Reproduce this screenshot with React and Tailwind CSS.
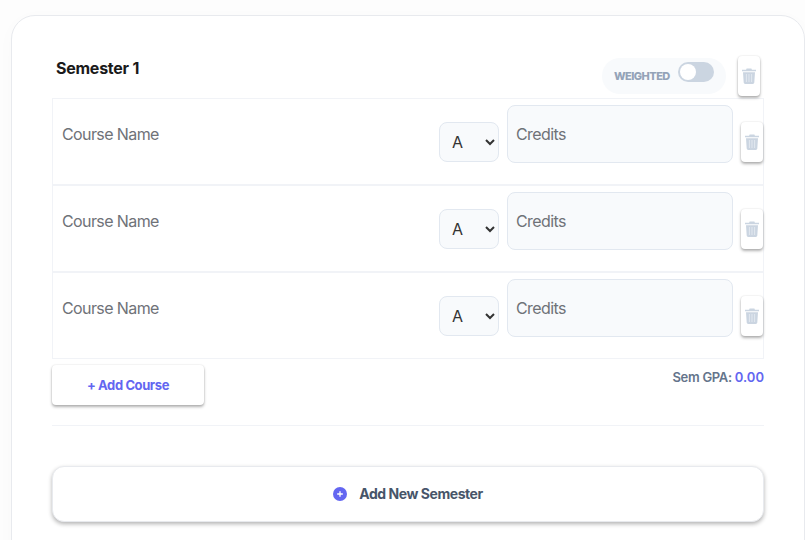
const COURSES = [1, 2, 3]

function TrashIcon() {
  return (
    <svg width="14" height="16" viewBox="0 0 14 16" className="block">
      <path d="M4.6 0.6h4.8l0.5 1.1H14v1.6H0V1.7h4.1zM1 4.3h12l-0.7 10.3c-0.05 0.8-0.7 1.4-1.5 1.4H3.2c-0.8 0-1.45-0.6-1.5-1.4z" fill="#cbd5e1" />
      <path d="M4.4 6v8M7 6v8M9.6 6v8" stroke="#e2e8f0" strokeWidth="1" />
    </svg>
  )
}

function CourseRow() {
  return (
    <div className="flex h-[87px] border-b-2 border-[#f1f3f7] last:border-b last:h-[86px]">
      <div className="flex-1 pl-[9px] pt-[6px]">
        <input placeholder="Course Name" className="w-full h-[58px] bg-transparent text-base tracking-[-0.6px] text-[#374151] placeholder:text-[#6f7278] outline-none" />
      </div>
      <select defaultValue="A" className="mt-[23px] ml-[8px] w-[60px] h-[40px] pl-[8px] bg-[#f8fafc] border border-[#e2e8f0] rounded-lg text-base text-[#333333] outline-none">
        <option>A</option>
        <option>B</option>
        <option>C</option>
      </select>
      <input placeholder="Credits" className="mt-[6px] ml-[8px] w-[226px] h-[58px] px-[8px] bg-[#f8fafc] border border-[#e2e8f0] rounded-lg text-base tracking-[-0.6px] placeholder:text-[#6f7278] outline-none" />
      <button className="mt-[23px] ml-[8px] w-[22px] h-[40px] flex items-center justify-center bg-white rounded shadow-[0_0_2px_rgba(0,0,0,0.12),0_2px_3px_rgba(0,0,0,0.3)]">
        <TrashIcon />
      </button>
    </div>
  )
}

export default function App() {
  return (
    <div className="h-[540px] overflow-hidden bg-[#fdfdfd] pl-[11px] pt-[15px] font-['Inter',sans-serif]">
      <div className="w-[794px] h-[600px] bg-white border border-[#e8eaee] rounded-[24px] pl-[40px] pr-[40px] pt-[40px] shadow-[0_4px_20px_rgba(0,0,0,0.02)]">

        {/* semester header */}
        <div className="flex items-start h-[42px]">
          <h2 className="pl-[4px] text-base font-bold leading-[24px] tracking-[-0.25px] text-[#1a1a1a]">Semester 1</h2>
          <div className="ml-auto mt-[2px] mr-[12px] w-[124px] h-[36px] flex items-center pl-[12px] gap-[8px] bg-[#f8fafc] rounded-full">
            <span className="text-[11px] font-extrabold tracking-[-0.55px] text-[#94a3b8]">WEIGHTED</span>
            <span className="relative -mt-[8px] w-[36px] h-[20px] rounded-full bg-[#cbd5e1]">
              <span className="absolute left-[2px] top-[2px] w-[16px] h-[16px] rounded-full bg-white" />
            </span>
          </div>
          <button className="w-[22px] h-[40px] mr-[4px] flex items-center justify-center bg-white rounded shadow-[0_0_2px_rgba(0,0,0,0.12),0_2px_3px_rgba(0,0,0,0.3)]">
            <TrashIcon />
          </button>
        </div>

        {/* courses */}
        <div className="border border-[#f1f3f7] border-b-0 -mb-px">
          {COURSES.map(c => <CourseRow key={c} />)}
        </div>

        <div className="flex items-start pt-[7px]">
          <button className="w-[152px] h-[40px] pt-[1px] bg-white rounded text-[13px] font-bold tracking-[-0.4px] text-[#6366f1] shadow-[0_0_2px_rgba(0,0,0,0.12),0_2px_3px_rgba(0,0,0,0.3)]">
            + Add Course
          </button>
          <p className="ml-auto pt-[3px] text-[13px] font-semibold tracking-[-0.3px] text-[#64748b] leading-[18px]">
            Sem GPA: <span className="text-[#6366f1] tracking-normal">0.00</span>
          </p>
        </div>

        <div className="mt-[20px] border-t border-[#f1f3f7]" />

        <button className="mt-[40px] w-full h-[56px] flex items-center justify-center gap-[12px] bg-white border border-[#e8eaee] rounded-xl text-sm font-bold tracking-[-0.45px] text-[#475569] shadow-[0_2px_4px_rgba(0,0,0,0.3)]">
          <svg width="14" height="14" viewBox="0 0 14 14">
            <circle cx="7" cy="7" r="7" fill="#6366f1" />
            <path d="M7 4.2v5.6M4.2 7h5.6" stroke="#fff" strokeWidth="1.3" />
          </svg>
          Add New Semester
        </button>
      </div>
    </div>
  )
}
